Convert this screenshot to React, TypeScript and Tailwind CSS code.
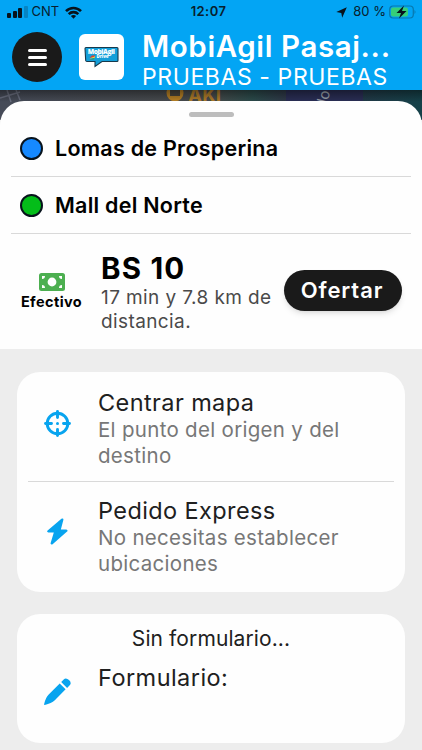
import type { ReactNode } from "react";

const Wifi = () => (
  <svg width="17" height="13" viewBox="0 0 17 13" fill="none" stroke="#08131c" strokeWidth="2.6">
    <path d="M1 5.1C5.2 .9 11.800 .9 16 5.100" />
    <path d="M3.700 8.100C6.400 5.500 10.600 5.500 13.300 8.100" />
    <path d="M8.500 12.700L5.900 10C7.400 8.600 9.600 8.600 11.100 10Z" fill="#08131c" stroke="none" />
  </svg>
);

const Logo = () => (
  <svg width="35" height="22" viewBox="0 0 35 22">
    <path d="M2 1.500H33Q34 1.500 34 2.500V14.500Q34 15.500 33 15.500H18L11 20.500V15.500H3Q1.800 15.500 1.700 14.500L1 2.500Q1 1.500 2 1.500Z" fill="#149fd9" stroke="#17394c" strokeWidth="1.100" />
    <text x="3.800" y="8.300" fontFamily="Open Sans, sans-serif" fontWeight="800" fontSize="6.600" fill="#fff" textLength="27">MobiAgil</text>
    <text x="12.500" y="12.300" fontFamily="Open Sans, sans-serif" fontWeight="800" fontSize="4.400" fill="#fff" textLength="12">Drive</text>
    <path d="M5.500 12L8 9.500H11.500L10 11Z" fill="#e23b2e" />
    <path d="M5.300 12.500L11.300 10.300L10.500 12Z" fill="#f5d33c" />
    <path d="M5.500 13.400L10.500 12L9.500 13.500Z" fill="#3c9b46" />
  </svg>
);

const Cash = () => (
  <svg width="26" height="18" viewBox="0 0 26 18">
    <rect width="26" height="18" rx="2.500" fill="#4caf50" />
    <circle cx="13" cy="9" r="4.400" fill="#fff" />
    <path d="M3 3H6A3 3 0 0 1 3 6ZM23 3H20A3 3 0 0 0 23 6ZM3 15H6A3 3 0 0 0 3 12ZM23 15H20A3 3 0 0 1 23 12Z" fill="#fff" />
  </svg>
);

const Target = () => (
  <svg width="27" height="27" viewBox="0 0 27 27" fill="none" stroke="#08a4ef" strokeWidth="2.900" strokeLinecap="round">
    <circle cx="13.500" cy="13.500" r="10.300" />
    <path d="M13.500 1.500V7.500M13.500 19.500V25.500M1.500 13.500H7.500M19.500 13.500H25.500" />
    <circle cx="13.500" cy="13.500" r="1.500" fill="#08a4ef" stroke="none" />
  </svg>
);

const Bolt = () => (
  <svg width="21" height="27" viewBox="0 0 21 27" fill="#08a4ef" stroke="#08a4ef" strokeWidth="2.400" strokeLinejoin="round">
    <path d="M15.200 1.600L1.400 13.300H8.400L4.800 25.300L19.300 12.700H12.300Z" />
  </svg>
);

const Pencil = () => (
  <svg width="27" height="27" viewBox="0 0 27 27" fill="#08a4ef">
    <path d="M15.700 5.400L21.600 11.300L10.800 22.200Q7.500 25.300 .7 26.900Q0 27 .1 26.200Q1.600 19.500 4.700 16.500Z" />
    <path d="M17.200 4L19.700 1.500Q22-.8 25 2.100Q28 5 25.700 7.300L23.100 9.900Z" />
  </svg>
);

function Place({ color, name }: { color: string; name: string }) {
  return (
    <div className="mx-[11px] flex h-[57px] items-center border-b border-[#d9d9d9] pl-[9px]">
      <span className={`h-[23px] w-[23px] rounded-full border-2 border-[#08131c] ${color}`} />
      <span className="ml-[12px] text-[21.5px] leading-6 font-semibold tracking-[0.25px] text-black">{name}</span>
    </div>
  );
}

function Option({ icon, title, lines }: { icon: ReactNode; title: string; lines: string[] }) {
  return (
    <div className="flex">
      <div className="flex w-[81px] shrink-0 justify-center pt-[21px]">{icon}</div>
      <div className="whitespace-nowrap">
        <p className="text-[23.5px] leading-[28px] tracking-[0.4px] text-[#202020]">{title}</p>
        {lines.map((line) => (
          <p key={line} className="text-[20.5px] leading-[26px] tracking-[0.3px] text-[#777]">{line}</p>
        ))}
      </div>
    </div>
  );
}

export default function App() {
  return (
    <div className="flex h-[750px] w-[422px] flex-col overflow-hidden bg-[#ededed] font-['Inter',sans-serif]">
      {/* Header */}
      <header className="h-[90px] shrink-0 bg-[#03a5f4]">
        <div className="flex h-[24px] items-center text-[#08202e]">
          <div className="flex flex-1 items-center">
            <div className="ml-[7px] flex items-end gap-[1.5px]">
              <span className="h-[5px] w-[4px] rounded-[1px] bg-[#08131c]" />
              <span className="h-[7px] w-[4px] rounded-[1px] bg-[#08131c]" />
              <span className="h-[10px] w-[4px] rounded-[1px] bg-[#08131c]" />
              <span className="h-[12px] w-[4px] rounded-[1px] bg-[#0784c2]" />
            </div>
            <span className="mr-[6px] ml-[4px] text-[13px]">CNT</span>
            <Wifi />
          </div>
          <span className="text-[13px] font-semibold tracking-[0.4px]">12:07</span>
          <div className="flex flex-1 items-center justify-end pr-[5px]">
            <svg width="11" height="11" viewBox="0 0 11 11" fill="#08131c">
              <path d="M10.800 .3L6.200 10.700L5.300 5.900L.3 5Z" />
            </svg>
            <span className="mr-[3px] ml-[6px] text-[13px]">80 %</span>
            <svg width="28" height="14" viewBox="0 0 28 14">
              <rect x=".7" y="1" width="23.600" height="12" rx="3.500" fill="none" stroke="#0878ad" strokeWidth="1.200" />
              <rect x="2" y="2.500" width="17" height="9" rx="2" fill="#36cf79" />
              <path d="M25.500 5Q27.500 7 25.500 9Z" fill="#0878ad" />
              <path d="M15 .5L7.500 8H12L10 13.500L17.500 6H13Z" fill="#08131c" />
            </svg>
          </div>
        </div>
        <div className="flex pl-[12px]">
          <button className="mt-[7.5px] flex h-[50px] w-[50px] flex-col items-center justify-center gap-[4px] rounded-full bg-[#1a1a1a] pt-[2px]">
            <span className="h-[3px] w-[19px] rounded bg-white" />
            <span className="h-[3px] w-[19px] rounded bg-white" />
            <span className="h-[3px] w-[19px] rounded bg-white" />
          </button>
          <div className="mt-[10px] ml-[17px] flex h-[46px] w-[45px] items-center justify-center rounded-[6px] bg-white">
            <Logo />
          </div>
          <div className="ml-[18px] whitespace-nowrap text-white">
            <h1 className="mt-[5px] text-[29.5px] leading-[35px] font-semibold tracking-[0.6px]">MobiAgil Pasaj...</h1>
            <p className="h-[26px] overflow-hidden text-[23px] leading-[27px] tracking-[0.6px]">PRUEBAS - PRUEBAS</p>
          </div>
        </div>
      </header>

      {/* Strip of map left visible above the sheet */}
      <div className="h-[11px] shrink-0">
        <svg width="422" height="30" viewBox="0 0 422 30">
          <defs>
            <linearGradient id="map">
              <stop offset="0" stopColor="#464b58" />
              <stop offset=".5" stopColor="#484b4c" />
              <stop offset=".6" stopColor="#2b4b4b" />
              <stop offset=".7" stopColor="#303448" />
              <stop offset="1" stopColor="#154149" />
            </linearGradient>
            <linearGradient id="shade" x2="0" y2="1">
              <stop offset="0" stopColor="#000" stopOpacity=".4" />
              <stop offset=".4" stopColor="#000" stopOpacity="0" />
            </linearGradient>
          </defs>
          <rect width="422" height="30" fill="url(#map)" />
          <path d="M0 8L20 2M7 0L11 12M16 0L20 10" stroke="#6b7080" strokeWidth="1.500" />
          <rect x="286" width="77" height="12" fill="#2a2e55" />
          <circle cx="175" cy="3" r="8.500" fill="#b98225" />
          <rect x="170" y="-2" width="10" height="8" fill="#49453c" />
          <text x="188" y="12" fontSize="19" fontWeight="700" fill="#b07d2a">AKI</text>
          <text x="327" y="14" fontSize="15" fill="#9ba1ac" transform="rotate(-75 327 14)">lo</text>
          <rect width="422" height="30" fill="url(#shade)" />
        </svg>
      </div>

      {/* Trip sheet */}
      <section className="relative h-[248px] shrink-0 rounded-t-[24px] bg-[#fefefe]">
        <div className="flex h-[19px] justify-center pt-[11px]">
          <span className="h-[5px] w-[45px] rounded-full bg-[#bdbdbd]" />
        </div>
        <Place color="bg-[#1689ff]" name="Lomas de Prosperina" />
        <Place color="bg-[#04bd19]" name="Mall del Norte" />
        <div className="flex">
          <div className="flex w-[103px] shrink-0 flex-col items-center pt-[39px]">
            <Cash />
            <span className="mt-px text-[14.5px] leading-5 font-bold tracking-[0.4px] text-black">Efectivo</span>
          </div>
          <div className="-ml-[2px] w-[183px] shrink-0 pt-[17px] whitespace-nowrap">
            <p className="text-[29.5px] leading-[34px] font-bold tracking-[1.2px] text-black">BS 10</p>
            <p className="mt-px text-[19px] leading-6 tracking-[0.4px] text-[#4a4a4a]">17 min y 7.8 km de</p>
            <p className="text-[19px] leading-6 tracking-[0.4px] text-[#4a4a4a]">distancia.</p>
          </div>
          <button className="mt-[36px] h-[41px] w-[118px] rounded-full bg-[#1a1a1a] pr-[2px] text-[22px] font-semibold tracking-[0.9px] text-white shadow-md">Ofertar</button>
        </div>
      </section>

      {/* Shortcuts */}
      <section className="mx-[17px] mt-[23px] h-[220px] shrink-0 rounded-[23px] bg-[#fefefe]">
        <div className="h-[109px] pt-[17px]">
          <Option icon={<Target />} title="Centrar mapa" lines={["El punto del origen y del", "destino"]} />
        </div>
        <div className="mx-[11px] h-px bg-[#d9d9d9]" />
        <div className="pt-[15px]">
          <Option icon={<Bolt />} title="Pedido Express" lines={["No necesitas establecer", "ubicaciones"]} />
        </div>
      </section>

      {/* Form */}
      <section className="mx-[17px] mt-[22px] h-[129px] shrink-0 rounded-[23px] bg-[#fefefe] pt-[11px] text-[#202020]">
        <p className="text-center text-[21px] leading-[28px] tracking-[0.1px]">Sin formulario...</p>
        <div className="flex">
          <div className="flex w-[81px] justify-center pt-[25px]">
            <Pencil />
          </div>
          <p className="mt-[11px] text-[23.5px] leading-[28px] tracking-[0.45px]">Formulario:</p>
        </div>
      </section>
    </div>
  );
}
